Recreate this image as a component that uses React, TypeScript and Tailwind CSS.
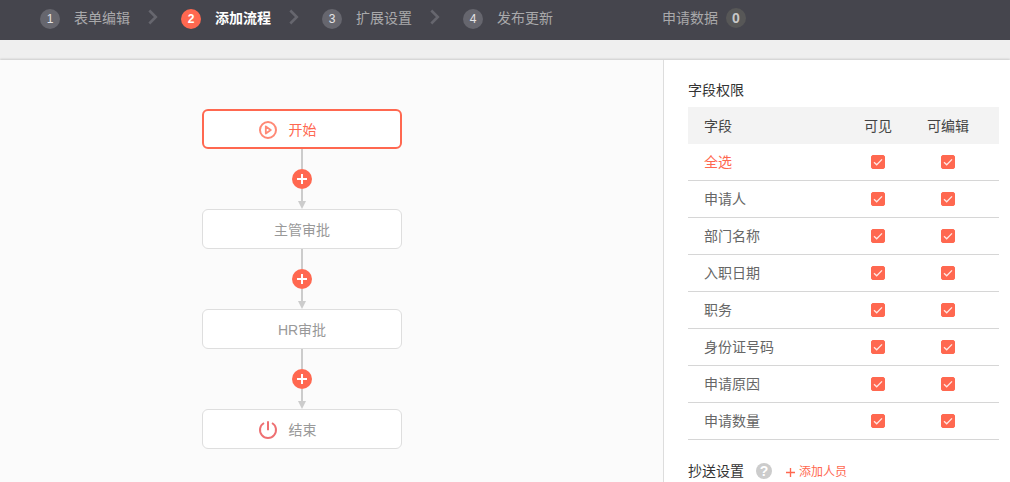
import { Fragment, useState } from "react";
import clsx from "clsx";

// ─── Data ─────────────────────────────────────────────────────────────────────

const STEPS = ["表单编辑", "添加流程", "扩展设置", "发布更新"];

interface FlowNode {
  id: string;
  label: string;
  icon?: "play" | "power";
}

const NODES: FlowNode[] = [
  { id: "start", label: "开始", icon: "play" },
  { id: "manager", label: "主管审批" },
  { id: "hr", label: "HR审批" },
  { id: "end", label: "结束", icon: "power" },
];

const FIELDS = ["申请人", "部门名称", "入职日期", "职务", "身份证号码", "申请原因", "申请数量"];

type Permission = { visible: boolean; editable: boolean };

// ─── Icons ────────────────────────────────────────────────────────────────────

function ChevronIcon() {
  return (
    <svg className="h-4 w-[10px]" viewBox="0 0 10 16" fill="none" stroke="#66666e" strokeWidth="2.6" aria-hidden="true">
      <path d="M1.3 1.5 7.8 8l-6.5 6.5" />
    </svg>
  );
}

function PlayIcon() {
  return (
    <svg className="size-5" viewBox="0 0 20 20" fill="none" stroke="#ff8975" strokeWidth="2" aria-hidden="true">
      <circle cx="10" cy="10" r="8" />
      <path d="M7.8 6.4v7.2l5-3.6z" strokeWidth="1.8" strokeLinejoin="round" />
    </svg>
  );
}

function PowerIcon() {
  return (
    <svg className="size-5" viewBox="0 0 20 20" fill="none" stroke="#ee7072" strokeWidth="2" aria-hidden="true">
      <path d="M6 3a8 8 0 1 0 8 0" />
      <path d="M10 1.2v9" />
    </svg>
  );
}

function PlusIcon({ className }: { className: string }) {
  return (
    <svg className={className} viewBox="0 0 10 10" fill="none" stroke="currentColor" aria-hidden="true">
      <path d="M5 0v10M0 5h10" />
    </svg>
  );
}

// ─── Header ───────────────────────────────────────────────────────────────────

function Header() {
  return (
    <header className="flex h-10 items-start bg-[#45454d] pt-2 pl-10 text-sm leading-5 whitespace-nowrap text-[#a9a9ab]">
      <nav className="flex">
        {STEPS.map((step, i) => {
          const active = i === 1;
          return (
            <Fragment key={step}>
              {i > 0 && (
                <span className="flex h-[18px] w-[51px] items-center pl-[18px]">
                  <ChevronIcon />
                </span>
              )}
              <button type="button" aria-current={active ? "step" : undefined} className="flex gap-[14px]">
                <span
                  className={clsx(
                    "mt-px size-5 rounded-full text-center text-xs leading-5",
                    active ? "bg-[#ff6850] font-bold text-white" : "bg-[#66666e] text-[#e4e4e6]"
                  )}
                >
                  {i + 1}
                </span>
                <span className={clsx(active && "font-bold text-white")}>{step}</span>
              </button>
            </Fragment>
          );
        })}
      </nav>
      <button type="button" className="ml-[109px] flex gap-2">
        申请数据
        <span className="size-5 rounded-full bg-[#575757] text-center font-bold text-[#c8c8c8]">0</span>
      </button>
    </header>
  );
}

// ─── Flow ─────────────────────────────────────────────────────────────────────

function Connector() {
  return (
    <div className="flex h-[60px] flex-col items-center">
      <span className="h-5 w-0.5 bg-[#cccccc]" />
      <button
        type="button"
        aria-label="添加节点"
        className="flex size-5 items-center justify-center rounded-full bg-[#ff6850] text-white"
      >
        <PlusIcon className="size-[10px] stroke-2" />
      </button>
      <span className="w-0.5 flex-1 bg-[#cccccc]" />
      <svg className="h-2 w-2" viewBox="0 0 8 8" fill="#cccccc" aria-hidden="true">
        <path d="M0 0h8L4 8z" />
      </svg>
    </div>
  );
}

function Flow() {
  const [selected, setSelected] = useState("start");

  return (
    <main className="flex flex-1 flex-col items-center bg-[#fbfbfb] pt-[49px] pr-[59px] pb-8">
      {NODES.map((node, i) => (
        <Fragment key={node.id}>
          {i > 0 && <Connector />}
          <button
            type="button"
            onClick={() => setSelected(node.id)}
            className={clsx(
              "flex h-10 w-[200px] items-center justify-center rounded-md bg-white pt-0.5 text-sm",
              node.icon && "gap-[11px] pr-[30px]",
              selected === node.id
                ? "border-2 border-[#ff6850] text-[#ff6850]"
                : "border border-[#dedede] text-[#999999]"
            )}
          >
            {node.icon === "play" && <PlayIcon />}
            {node.icon === "power" && <PowerIcon />}
            {node.label}
          </button>
        </Fragment>
      ))}
    </main>
  );
}

// ─── Permissions ──────────────────────────────────────────────────────────────

interface CheckProps {
  label: string;
  checked: boolean;
  onChange: (checked: boolean) => void;
}

function Check({ label, checked, onChange }: CheckProps) {
  return (
    <label className="mx-auto grid size-[14px]">
      <input
        type="checkbox"
        aria-label={label}
        checked={checked}
        onChange={(e) => onChange(e.target.checked)}
        className="col-start-1 row-start-1 size-[14px] appearance-none rounded-xs border border-[#cccccc] bg-white checked:border-[#ff6850] checked:bg-[#ff6850]"
      />
      {checked && (
        <svg
          className="pointer-events-none col-start-1 row-start-1 size-[14px]"
          viewBox="0 0 14 14"
          fill="none"
          stroke="#ffe9e5"
          strokeWidth="1.3"
          aria-hidden="true"
        >
          <path d="m3 7.2 2.7 2.6L11 4.4" />
        </svg>
      )}
    </label>
  );
}

function PermissionTable() {
  const [rows, setRows] = useState<Permission[]>(FIELDS.map(() => ({ visible: true, editable: true })));

  const setAll = (key: keyof Permission, value: boolean) =>
    setRows(rows.map((row) => ({ ...row, [key]: value })));
  const setOne = (index: number, key: keyof Permission, value: boolean) =>
    setRows(rows.map((row, i) => (i === index ? { ...row, [key]: value } : row)));

  return (
    <table className="w-full table-fixed border-separate border-spacing-0 text-left">
      <thead className="bg-[#f3f3f3] text-[#444444]">
        <tr className="h-[37px]">
          <th className="pl-4 font-normal">字段</th>
          <th className="w-[70px] text-center font-normal">可见</th>
          <th className="w-[86px] pr-4 text-center font-normal">可编辑</th>
        </tr>
      </thead>
      <tbody className="text-[#666666]">
        <tr className="h-[37px] *:border-b *:border-[#d6d6d6]">
          <td className="pl-4 text-[#ff6850]">全选</td>
          <td>
            <Check label="全选 可见" checked={rows.every((r) => r.visible)} onChange={(v) => setAll("visible", v)} />
          </td>
          <td className="pr-4">
            <Check label="全选 可编辑" checked={rows.every((r) => r.editable)} onChange={(v) => setAll("editable", v)} />
          </td>
        </tr>
        {FIELDS.map((field, i) => (
          <tr key={field} className="h-[37px] *:border-b *:border-[#d6d6d6]">
            <td className="pl-4">{field}</td>
            <td>
              <Check label={`${field} 可见`} checked={rows[i].visible} onChange={(v) => setOne(i, "visible", v)} />
            </td>
            <td className="pr-4">
              <Check label={`${field} 可编辑`} checked={rows[i].editable} onChange={(v) => setOne(i, "editable", v)} />
            </td>
          </tr>
        ))}
      </tbody>
    </table>
  );
}

function Sidebar() {
  return (
    <aside className="w-[347px] shrink-0 border-l border-[#dddddd] bg-white pt-5 pr-[11px] pl-6 text-sm leading-5 text-[#333333]">
      <h2 className="mb-[7px]">字段权限</h2>
      <PermissionTable />
      <div className="mt-[21px] flex items-center">
        <h2>抄送设置</h2>
        <button
          type="button"
          aria-label="帮助"
          className="ml-3 size-4 rounded-full bg-[#cccccc] text-center text-sm leading-4 font-bold text-white"
        >
          ?
        </button>
        <button type="button" className="ml-[14px] flex items-center gap-1 pt-0.5 text-xs text-[#ff6850]">
          <PlusIcon className="size-[9px] stroke-[1.5]" />
          添加人员
        </button>
      </div>
    </aside>
  );
}

// ─── Page ─────────────────────────────────────────────────────────────────────

export default function App() {
  return (
    <div className="flex h-screen flex-col overflow-hidden bg-[#efefef] font-['Liberation_Sans','Noto_Sans_CJK_SC',sans-serif]">
      <Header />
      <div className="mt-5 flex flex-1 shadow-[0_-1px_2px_rgba(0,0,0,0.15)]">
        <Flow />
        <Sidebar />
      </div>
    </div>
  );
}
